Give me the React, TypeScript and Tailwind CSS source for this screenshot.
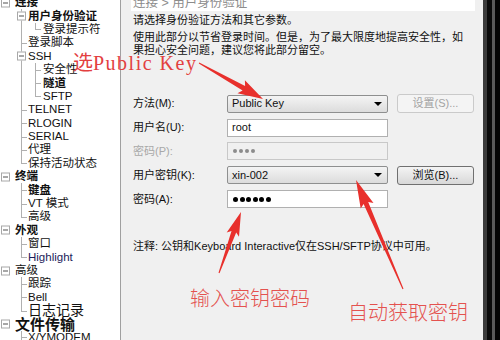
import React from "react";

type Node = {
  t: string;
  lv: 0 | 1 | 2;
  box?: boolean;
  bold?: boolean;
  last?: boolean;
  cls?: string;
};

const tree: Node[] = [
  { t: "连接", lv: 0, box: true, bold: true },
  { t: "用户身份验证", lv: 1, box: true, bold: true },
  { t: "登录提示符", lv: 2, last: true },
  { t: "登录脚本", lv: 1 },
  { t: "SSH", lv: 1, box: true },
  { t: "安全性", lv: 2 },
  { t: "隧道", lv: 2, bold: true },
  { t: "SFTP", lv: 2, last: true },
  { t: "TELNET", lv: 1 },
  { t: "RLOGIN", lv: 1 },
  { t: "SERIAL", lv: 1 },
  { t: "代理", lv: 1 },
  { t: "保持活动状态", lv: 1, last: true },
  { t: "终端", lv: 0, box: true, bold: true },
  { t: "键盘", lv: 1, bold: true },
  { t: "VT 模式", lv: 1 },
  { t: "高级", lv: 1, last: true },
  { t: "外观", lv: 0, box: true, bold: true },
  { t: "窗口", lv: 1 },
  { t: "Highlight", lv: 1, last: true, cls: "text-[#1c1c5a]" },
  { t: "高级", lv: 0, box: true },
  { t: "跟踪", lv: 1 },
  { t: "Bell", lv: 1 },
  { t: "日志记录", lv: 1, last: true, cls: "text-[14px]" },
  { t: "文件传输", lv: 0, box: true, bold: true, cls: "text-[15px]" },
  { t: "X/YMODEM", lv: 1 },
];

const pad = ["pl-[15px]", "pl-[28px]", "pl-[43px]"];

function TreeRow({ n }: { n: Node }) {
  return (
    <div className="relative h-[13.4px] flex items-center">
      {n.lv >= 1 && (
        <span
          className={`absolute left-[21px] top-0 w-px bg-[#b0b0b0] ${
            n.lv === 1 && n.last ? "h-1/2" : "h-full"
          }`}
        />
      )}
      {n.lv === 2 && (
        <span
          className={`absolute left-[35px] top-0 w-px bg-[#b0b0b0] ${
            n.last ? "h-1/2" : "h-full"
          }`}
        />
      )}
      {n.lv === 1 && !n.box && (
        <span className="absolute left-[21px] top-1/2 w-[6px] h-px bg-[#b0b0b0]" />
      )}
      {n.lv === 2 && (
        <span className="absolute left-[35px] top-1/2 w-[6px] h-px bg-[#b0b0b0]" />
      )}
      {n.box && (
        <span
          className={`absolute top-1/2 -translate-y-1/2 w-[9px] h-[9px] border border-[#a8a8a8] bg-white flex items-center justify-center ${
            n.lv === 0 ? "left-[1px]" : "left-[17px]"
          }`}
        >
          <span className="w-[5px] h-px bg-[#505050]" />
        </span>
      )}
      <span
        className={`${pad[n.lv]} whitespace-nowrap text-[11.5px] leading-[13px] ${
          n.bold ? "font-bold" : ""
        } ${n.cls ?? "text-[#111]"}`}
      >
        {n.t}
      </span>
    </div>
  );
}

function Select({ value }: { value: string }) {
  return (
    <div className="flex items-center h-[18px] border border-[#8e8f8f] rounded-[2px] bg-linear-to-b from-[#f4f4f4] to-[#dcdcdc] pl-[4px] pr-[5px]">
      <span>{value}</span>
      <span className="ml-auto w-0 h-0 border-x-[4px] border-x-transparent border-t-[4px] border-t-black" />
    </div>
  );
}

function Dots({ n, grey }: { n: number; grey?: boolean }) {
  return (
    <div
      className={`flex items-center h-[18px] border pl-[5px] ${
        grey ? "gap-[2px] border-[#c8c8c8] bg-[#f0f0f0]" : "gap-[1.6px] border-[#b0b0b0] bg-white"
      }`}
    >
      {Array.from({ length: n }).map((_, i) => (
        <span
          key={i}
          className={
            grey
              ? "w-[4px] h-[4px] rounded-full bg-[#8c8c8c]"
              : "w-[5px] h-[5px] rounded-full bg-black"
          }
        />
      ))}
    </div>
  );
}

function arrow(
  tail: [number, number],
  tip: [number, number],
  headLen: number,
  headW: number,
  w0: number,
  w1: number
) {
  const dx = tip[0] - tail[0];
  const dy = tip[1] - tail[1];
  const L = Math.hypot(dx, dy);
  const ux = dx / L;
  const uy = dy / L;
  const nx = -uy;
  const ny = ux;
  const nk = [tip[0] - ux * headLen, tip[1] - uy * headLen];
  const bb = [nk[0] - ux * 3, nk[1] - uy * 3];
  const p = [
    [tail[0] + (nx * w0) / 2, tail[1] + (ny * w0) / 2],
    [nk[0] + (nx * w1) / 2, nk[1] + (ny * w1) / 2],
    [bb[0] + (nx * headW) / 2, bb[1] + (ny * headW) / 2],
    tip,
    [bb[0] - (nx * headW) / 2, bb[1] - (ny * headW) / 2],
    [nk[0] - (nx * w1) / 2, nk[1] - (ny * w1) / 2],
    [tail[0] - (nx * w0) / 2, tail[1] - (ny * w0) / 2],
  ];
  return p.map((q) => `${q[0].toFixed(1)},${q[1].toFixed(1)}`).join(" ");
}

export default function App() {
  return (
    <div className="relative w-[500px] h-[340px] overflow-hidden flex bg-[#f0f0f0] text-[#111] font-['Liberation_Sans','Noto_Sans_CJK_SC',sans-serif]">
      {/* tree */}
      <div className="w-[121px] shrink-0 bg-white border-r border-[#a0a0a0] overflow-hidden">
        <div className="-mt-[4px]">
          {tree.map((n, i) => (
            <TreeRow key={i} n={n} />
          ))}
        </div>
      </div>

      {/* right panel */}
      <div className="flex-1 flex flex-col pl-[10px] pr-[8px] text-[11px]">
        <div className="h-[11px] bg-white overflow-hidden shrink-0">
          <div className="-mt-[4px] pl-[2px] text-[12.5px] leading-[14px] text-[#8c8c8c]">
            连接 &gt; 用户身份验证
          </div>
        </div>
        <div className="pl-[2px] mt-[3px] leading-[13px]">请选择身份验证方法和其它参数。</div>
        <div className="pl-[2px] mt-[4px] leading-[13px]">
          使用此部分以节省登录时间。但是，为了最大限度地提高安全性，如
          <br />
          果担心安全问题，建议您将此部分留空。
        </div>

        <div className="pl-[2px] mt-[37px] grid grid-cols-[85px_161px_77px] gap-x-[9px] gap-y-[5.5px] items-center">
          <div>方法(M):</div>
          <Select value="Public Key" />
          <div className="h-[19px] border border-[#cacaca] rounded-[3px] bg-[#f4f4f4] text-[#a3a3a3] flex items-center justify-center">
            设置(S)...
          </div>

          <div>用户名(U):</div>
          <div className="h-[18px] border border-[#b0b0b0] bg-white pl-[4px] flex items-center">root</div>
          <div />

          <div className="text-[#a8a8a8]">密码(P):</div>
          <Dots n={4} grey />
          <div />

          <div>用户密钥(K):</div>
          <Select value="xin-002" />
          <div className="h-[19px] border border-[#707070] rounded-[3px] bg-linear-to-b from-[#f4f4f4] to-[#d8d8d8] flex items-center justify-center">
            浏览(B)...
          </div>

          <div>密码(A):</div>
          <Dots n={6} />
          <div />
        </div>

        <div className="pl-[2px] mt-[31.5px] leading-[13px] whitespace-nowrap">
          注释: 公钥和Keyboard Interactive仅在SSH/SFTP协议中可用。
        </div>
      </div>

      {/* window frame edge */}
      <div className="w-[17px] shrink-0 flex">
        <div className="w-[4px] bg-[#3c3c3c]" />
        <div className="w-[5px] bg-[#0a0a0a]" />
        <div className="w-[3px] bg-[#5a5a5a]" />
        <div className="w-[5px] bg-[#050505]" />
      </div>

      {/* annotations */}
      <div className="absolute left-[73px] top-[52px] text-[20px] leading-[22px] text-[#e3403f] whitespace-nowrap font-['Liberation_Serif','Noto_Sans_CJK_SC',serif]">
        选<span className="tracking-[1.5px]">Public Key</span>
      </div>
      <div className="absolute left-[190px] top-[285px] text-[20px] leading-[26px] text-[#e4524f] font-light whitespace-nowrap font-['Noto_Sans_CJK_SC',sans-serif]">
        输入密钥密码
      </div>
      <div className="absolute left-[348px] top-[299px] text-[20px] leading-[26px] text-[#e4524f] font-light whitespace-nowrap font-['Noto_Sans_CJK_SC',sans-serif]">
        自动获取密钥
      </div>
      <svg className="absolute inset-0 pointer-events-none" width="500" height="340" viewBox="0 0 500 340">
        <polygon points={arrow([199, 63], [263, 99], 22, 15, 1, 5)} fill="#e8302c" />
        <polygon points={arrow([403, 289], [356, 180], 25, 14, 1, 5)} fill="#e8302c" />
        <polygon points={arrow([219, 273], [241, 212], 21, 13, 1, 5)} fill="#e8302c" />
      </svg>
    </div>
  );
}
